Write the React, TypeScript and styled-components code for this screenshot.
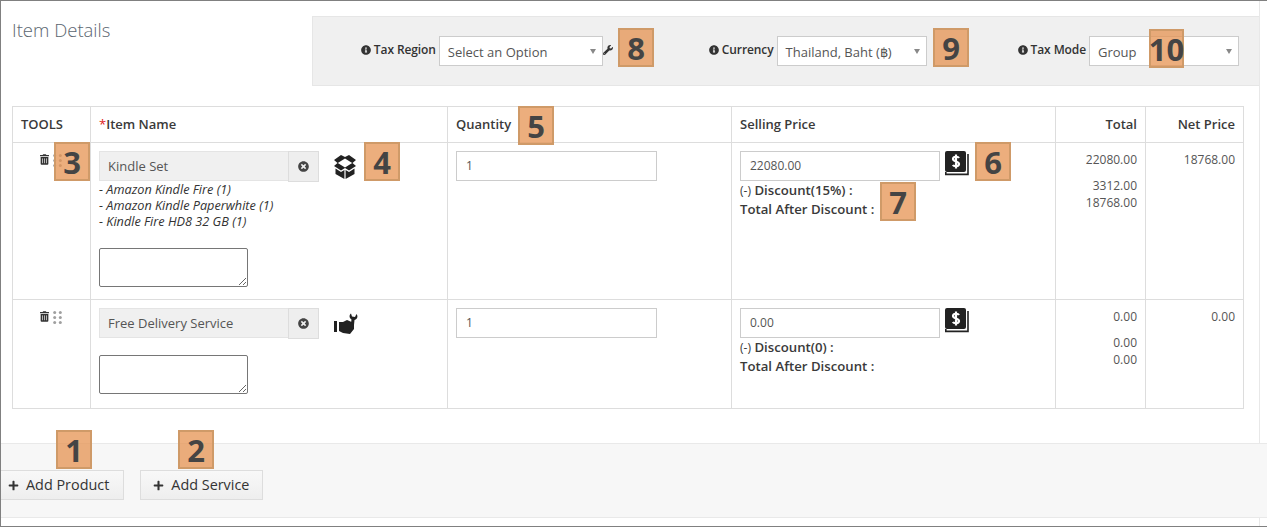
import React from 'react';
import styled, { createGlobalStyle } from 'styled-components';
import { FaInfoCircle, FaPlus, FaTimesCircle, FaTrashAlt, FaWrench } from 'react-icons/fa';

const GlobalStyle = createGlobalStyle`
  html, body {
    margin: 0;
    padding: 0;
    background: #fff;
  }
  body {
    font-family: 'Open Sans', 'Liberation Sans', sans-serif;
    font-size: 13px;
    color: #333;
  }
`;

const Page = styled.div`
  position: relative;
  box-sizing: border-box;
  width: 1267px;
  height: 527px;
  overflow: hidden;
  border-top: 1px solid #808080;
  border-left: 1px solid #808080;
  border-bottom: 1px solid #808080;
`;

const Panel = styled.div`
  box-sizing: border-box;
  width: 1259px;
  height: 442px;
  padding: 15px 0 0 11px;
  border-right: 1px solid #e8e8e8;
`;

const Head = styled.div`
  display: flex;
  justify-content: space-between;
  align-items: flex-start;
  height: 70px;
  margin-bottom: 20px;
`;

const Title = styled.h4`
  margin: 3px 0 0;
  font-size: 18.5px;
  line-height: 22px;
  font-weight: 300;
  color: #5b6670;
`;

const TaxBar = styled.div`
  box-sizing: border-box;
  display: flex;
  justify-content: flex-end;
  align-items: flex-start;
  width: 947px;
  height: 70px;
  padding: 19px 20px 0 0;
  background: #f0f0f0;
  border: 1px solid #e6e6e6;
  border-right: 0;
`;

const TaxGroup = styled.div<{ $gap?: number }>`
  display: flex;
  align-items: flex-start;
  margin-left: ${(p) => p.$gap ?? 0}px;
`;

const TaxLabel = styled.label`
  display: flex;
  align-items: center;
  gap: 3px;
  height: 27px;
  margin-right: 3px;
  font-size: 12px;
  font-weight: 600;
  color: #333;
  white-space: nowrap;
  letter-spacing: -0.1px;

  svg {
    width: 10px;
    height: 10px;
    color: #333;
  }
`;

const SelectBox = styled.div<{ $width: number }>`
  box-sizing: border-box;
  position: relative;
  width: ${(p) => p.$width}px;
  height: 30px;
  padding-left: 8px;
  line-height: 30px;
  font-size: 13px;
  color: #555;
  background: #fff;
  border: 1px solid #ccc;

  &::after {
    content: '';
    position: absolute;
    top: 12px;
    right: 6px;
    border-left: 3px solid transparent;
    border-right: 3px solid transparent;
    border-top: 5px solid #888;
  }
`;

const WrenchIcon = styled(FaWrench)`
  width: 10px;
  height: 10px;
  margin-top: 9px;
  color: #333;
`;

const Table = styled.table`
  table-layout: fixed;
  width: 1231px;
  border-collapse: collapse;
`;

const HeadCell = styled.th<{ $right?: boolean }>`
  box-sizing: border-box;
  height: 36px;
  padding: 0 8px 2px;
  border: 1px solid #ddd;
  text-align: ${(p) => (p.$right ? 'right' : 'left')};
  font-size: 13px;
  font-weight: 600;
  color: #3a3a3a;
`;

const Star = styled.span`
  color: #e02020;
  font-weight: 400;
`;

const Cell = styled.td<{ $right?: boolean }>`
  box-sizing: border-box;
  padding: 8px;
  border: 1px solid #ddd;
  vertical-align: top;
  text-align: ${(p) => (p.$right ? 'right' : 'left')};
  font-size: 12px;
`;

const Tools = styled.div`
  display: flex;
  justify-content: center;
  gap: 4px;
  padding: 3px 2px 0 0;

  svg:first-child {
    width: 9px;
    height: 11px;
    color: #333;
  }
`;

const NameRow = styled.div`
  display: flex;
  align-items: flex-start;
  height: 31px;
`;

const NameInput = styled.input`
  box-sizing: border-box;
  width: 189px;
  height: 30px;
  padding: 0 8px;
  font: 13px 'Open Sans', 'Liberation Sans', sans-serif;
  color: #555;
  background: #f0f0f0;
  border: 1px solid #e4e4e4;
  border-right: 0;
  outline: none;
`;

const ClearButton = styled.button`
  display: flex;
  align-items: center;
  justify-content: center;
  box-sizing: border-box;
  width: 31px;
  height: 31px;
  padding: 0;
  background: #eee;
  border: 1px solid #ddd;

  svg {
    width: 11px;
    height: 11px;
    color: #444;
  }
`;

const KindIcon = styled.span<{ $top: number }>`
  display: block;
  margin: ${(p) => p.$top}px 0 0 15px;
  line-height: 0;
`;

const SubItems = styled.div`
  margin-top: -1px;
  font-size: 12.7px;
  line-height: 16px;
  font-style: italic;
  color: #333;
`;

const Note = styled.textarea<{ $top: number; $bottom: number }>`
  display: block;
  box-sizing: border-box;
  width: 149px;
  height: 39px;
  margin-top: ${(p) => p.$top}px;
  margin-bottom: ${(p) => p.$bottom}px;
  border: 1px solid #767676;
  border-radius: 2px;
  background: #fff;
`;

const ValueInput = styled.input<{ $width: number }>`
  box-sizing: border-box;
  width: ${(p) => p.$width}px;
  height: 30px;
  padding: 0 8px 2px 9px;
  font: 12px 'Open Sans', 'Liberation Sans', sans-serif;
  color: #555;
  background: #fff;
  border: 1px solid #ccc;
  outline: none;
`;

const PriceRow = styled.div`
  display: flex;
  align-items: flex-start;
  gap: 5px;
`;

const PriceLines = styled.div`
  font-size: 13.2px;
  line-height: 18px;
  font-weight: 600;
  color: #3a3a3a;

  small {
    font-size: 12px;
    font-weight: 400;
  }
`;

const Amounts = styled.div`
  line-height: 17px;
  color: #555;
  font-size: 12px;
`;

const Amount = styled.div<{ $top?: number }>`
  margin-top: ${(p) => p.$top ?? 0}px;
`;

const Footer = styled.div`
  box-sizing: border-box;
  display: flex;
  align-items: flex-start;
  gap: 16px;
  width: 1266px;
  height: 75px;
  padding-top: 26px;
  background: #f7f7f7;
  border-top: 1px solid #e9e9e9;
  border-bottom: 1px solid #e9e9e9;
`;

const BottomEdge = styled.div`
  box-sizing: border-box;
  width: 1259px;
  height: 9px;
  border-right: 1px solid #e8e8e8;
`;

const AddButton = styled.button<{ $first?: boolean }>`
  display: flex;
  align-items: center;
  gap: 7px;
  box-sizing: border-box;
  height: 30px;
  padding: 0 ${(p) => (p.$first ? '14px 2px 7px' : '13px 2px 12px')};
  font: 500 14.4px 'Open Sans', 'Liberation Sans', sans-serif;
  color: #333;
  background: linear-gradient(#f8f8f8, #eee);
  border: 1px solid #ddd;
  ${(p) => (p.$first ? 'border-left: 0;' : '')}

  svg {
    width: 11px;
    height: 11px;
    margin-top: 2px;
  }
`;

const Marker = styled.div<{ $x: number; $y: number; $w?: number }>`
  position: absolute;
  left: ${(p) => p.$x - 1}px;
  top: ${(p) => p.$y - 1}px;
  box-sizing: border-box;
  display: flex;
  align-items: center;
  justify-content: center;
  width: ${(p) => p.$w ?? 36}px;
  height: 39px;
  font-size: 31px;
  font-weight: 700;
  color: #444;
  background: rgba(230, 147, 81, 0.75);
  border: 2px solid #cf9a68;
`;

const GripIcon = () => (
  <svg width="9" height="13" viewBox="0 0 9 13" fill="#a0a0a0">
    {[1.5, 6.5, 11.5].map((cy) => (
      <React.Fragment key={cy}>
        <circle cx="1.7" cy={cy} r="1.5" />
        <circle cx="7.3" cy={cy} r="1.5" />
      </React.Fragment>
    ))}
  </svg>
);

const BoxIcon = () => (
  <svg width="22" height="24" viewBox="0 0 22 24" fill="#222">
    <path
      d="M7 0 L11 2 L15 0 L22 5 L18.5 8 L22 11 L15 15.5 L11 13 L7 15.5 L0 11 L3.5 8 L0 5 Z M11 3.6 L3.8 8 L11 12.4 L18.2 8 Z"
      fillRule="evenodd"
    />
    <path d="M1.5 13.5 L7 17 L10.4 15 L10.4 24 L1.5 19 Z" />
    <path d="M20.5 13.5 L15 17 L11.6 15 L11.6 24 L20.5 19 Z" />
  </svg>
);

const ServiceIcon = () => (
  <svg width="24" height="22" viewBox="0 0 24 22" fill="#222">
    <rect x="0" y="8" width="3" height="11" />
    <path d="M5 9 L9 9 L13 7 L20 10 L20 16 L16 21 L9 20 L5 18 Z" />
    <path d="M17 10 L17.5 6.5 C15 5 15 2 17 0.5 L18 3.5 L21 4 L22.5 1 C24.5 3.5 23 6.5 20.5 7 L20 12 Z" />
  </svg>
);

const BookIcon = () => (
  <svg width="24" height="25" viewBox="0 0 24 25">
    <rect x="0" y="0" width="21" height="21" rx="2" fill="#222" />
    <path d="M0.8 21 L0.8 23.4 L23 23.4 L23 3" fill="none" stroke="#222" strokeWidth="1.6" />
    <path
      d="M14 7 C13 5.2 8 5.2 8 8 C8 11 14 10 14 13 C14 15.8 9 15.8 7.8 14 M11 3.5 L11 17.5"
      fill="none"
      stroke="#fff"
      strokeWidth="2.2"
    />
  </svg>
);

const rows = [
  {
    name: 'Kindle Set',
    icon: <BoxIcon />,
    iconTop: 4,
    subItems: ['Amazon Kindle Fire (1)', 'Amazon Kindle Paperwhite (1)', 'Kindle Fire HD8 32 GB (1)'],
    noteTop: 19,
    noteBottom: 4,
    price: '22080.00',
    discount: 'Discount(15%) :',
    total: '22080.00',
    off: '3312.00',
    after: '18768.00',
    net: '18768.00',
  },
  {
    name: 'Free Delivery Service',
    icon: <ServiceIcon />,
    iconTop: 5,
    subItems: [],
    noteTop: 16,
    noteBottom: 6,
    price: '0.00',
    discount: 'Discount(0) :',
    total: '0.00',
    off: '0.00',
    after: '0.00',
    net: '0.00',
  },
];

const markers = [
  { label: '1', x: 56, y: 430 },
  { label: '2', x: 178, y: 430 },
  { label: '3', x: 54, y: 142 },
  { label: '4', x: 364, y: 142 },
  { label: '5', x: 518, y: 106 },
  { label: '6', x: 975, y: 142 },
  { label: '7', x: 880, y: 182 },
  { label: '8', x: 618, y: 28 },
  { label: '9', x: 933, y: 28 },
  { label: '10', x: 1149, y: 29 },
];

export default function App() {
  return (
    <Page>
      <GlobalStyle />
      <Panel>
        <Head>
          <Title>Item Details</Title>
          <TaxBar>
            <TaxGroup>
              <TaxLabel>
                <FaInfoCircle />
                Tax Region
              </TaxLabel>
              <SelectBox $width={164}>Select an Option</SelectBox>
              <WrenchIcon />
            </TaxGroup>
            <TaxGroup $gap={96}>
              <TaxLabel>
                <FaInfoCircle />
                Currency
              </TaxLabel>
              <SelectBox $width={150}>Thailand, Baht (฿)</SelectBox>
            </TaxGroup>
            <TaxGroup $gap={91}>
              <TaxLabel>
                <FaInfoCircle />
                Tax Mode
              </TaxLabel>
              <SelectBox $width={150}>Group</SelectBox>
            </TaxGroup>
          </TaxBar>
        </Head>
        <Table>
          <colgroup>
            <col width="78" />
            <col width="357" />
            <col width="284" />
            <col width="324" />
            <col width="90" />
            <col width="98" />
          </colgroup>
          <thead>
            <tr>
              <HeadCell>TOOLS</HeadCell>
              <HeadCell>
                <Star>*</Star>Item Name
              </HeadCell>
              <HeadCell>Quantity</HeadCell>
              <HeadCell>Selling Price</HeadCell>
              <HeadCell $right>Total</HeadCell>
              <HeadCell $right>Net Price</HeadCell>
            </tr>
          </thead>
          <tbody>
            {rows.map((row) => (
              <tr key={row.name}>
                <Cell>
                  <Tools>
                    <FaTrashAlt />
                    <GripIcon />
                  </Tools>
                </Cell>
                <Cell>
                  <NameRow>
                    <NameInput readOnly value={row.name} />
                    <ClearButton>
                      <FaTimesCircle />
                    </ClearButton>
                    <KindIcon $top={row.iconTop}>{row.icon}</KindIcon>
                  </NameRow>
                  {row.subItems.length > 0 && (
                    <SubItems>
                      {row.subItems.map((item) => (
                        <div key={item}>- {item}</div>
                      ))}
                    </SubItems>
                  )}
                  <Note $top={row.noteTop} $bottom={row.noteBottom} />
                </Cell>
                <Cell>
                  <ValueInput $width={201} readOnly value="1" />
                </Cell>
                <Cell>
                  <PriceRow>
                    <ValueInput $width={200} readOnly value={row.price} />
                    <BookIcon />
                  </PriceRow>
                  <PriceLines>
                    <div>
                      <small>(-)</small> {row.discount}
                    </div>
                    <div>Total After Discount :</div>
                  </PriceLines>
                </Cell>
                <Cell $right>
                  <Amounts>
                    <Amount>{row.total}</Amount>
                    <Amount $top={9}>{row.off}</Amount>
                    <Amount>{row.after}</Amount>
                  </Amounts>
                </Cell>
                <Cell $right>
                  <Amounts>{row.net}</Amounts>
                </Cell>
              </tr>
            ))}
          </tbody>
        </Table>
      </Panel>
      <Footer>
        <AddButton $first>
          <FaPlus />
          Add Product
        </AddButton>
        <AddButton>
          <FaPlus />
          Add Service
        </AddButton>
      </Footer>
      <BottomEdge />
      {markers.map((m) => (
        <Marker key={m.label} $x={m.x} $y={m.y} $w={m.label === '10' ? 35 : 36}>
          {m.label}
        </Marker>
      ))}
    </Page>
  );
}
